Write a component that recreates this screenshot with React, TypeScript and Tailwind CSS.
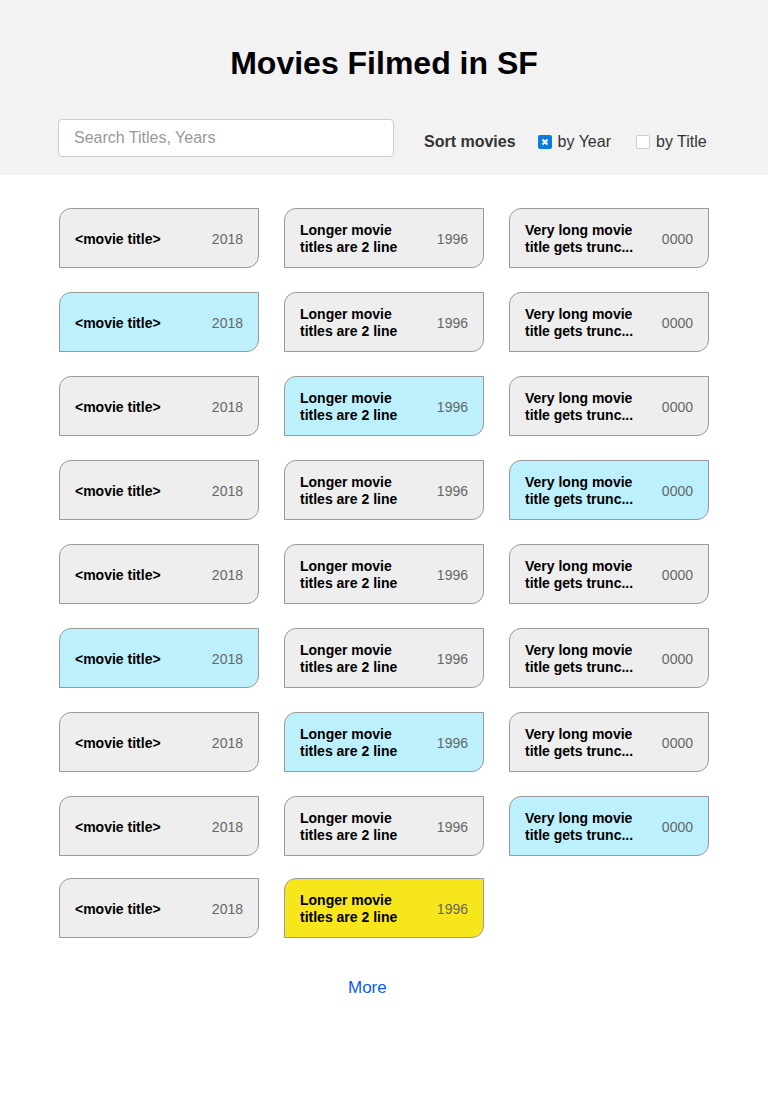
import React from 'react';

type Movie = { title: string; year: string; tone: 'gray' | 'cyan' | 'yellow'; last?: boolean };

const cols = [
    { title: '<movie title>', year: '2018' },
    { title: 'Longer movie titles are 2 line', year: '1996' },
    { title: 'Very long movie title gets trunc...', year: '0000' },
];

// which cell in each row is highlighted (col index), -1 = none
const highlight = [-1, 0, 1, 2, -1, 0, 1, 2];

const movies: Movie[] = [];
highlight.forEach(h => {
    cols.forEach((c, i) => movies.push({ ...c, tone: h === i ? 'cyan' : 'gray' }));
});
movies.push({ ...cols[0], tone: 'gray', last: true });
movies.push({ ...cols[1], tone: 'yellow', last: true });

const toneClass = {
    gray: 'bg-[#eeeeee]',
    cyan: 'bg-[#bdf0fd]',
    yellow: 'bg-[#f7e61c]',
};

const MovieCard: React.FC<{ movie: Movie }> = ({ movie }) => (
    <div className={`h-[60px] flex items-center justify-between pl-[15px] pr-[15px] pt-[2px] border border-[#999999] rounded-tl-[12px] rounded-br-[12px] ${toneClass[movie.tone]} ${movie.last ? 'mt-[-2px]' : ''}`}>
        <div className="w-[124px] text-[14px] leading-[17px] font-bold text-black">{movie.title}</div>
        <div className="text-[14px] text-[#666666]">{movie.year}</div>
    </div>
);

export default function App() {
    return (
        <div className="min-h-[1100px] bg-white" style={{ fontFamily: '"Liberation Sans", Arial, sans-serif' }}>
            {/* Header */}
            <div className="bg-[#f2f2f2] h-[175px] pt-[44px]">
                <h1 className="text-center text-[32px] leading-[38px] font-bold text-black">Movies Filmed in SF</h1>
                <div className="flex items-center mt-[37px] pl-[58px]">
                    <input
                        className="w-[336px] h-[38px] bg-white border border-[#cccccc] rounded-[4px] px-[15px] text-[16px] text-[#333] placeholder:text-[#999999] outline-none"
                        placeholder="Search Titles, Years"
                    />
                    <div className="flex items-center ml-[30px] mt-[8px] text-[16px] text-[#333333]">
                        <span className="font-bold">Sort movies</span>
                        <span className="ml-[22px] w-[14px] h-[14px] rounded-[2px] bg-[#0a7be0] flex items-center justify-center">
                            <svg width="8" height="8" viewBox="0 0 8 8">
                                <path d="M1.5 1.5 L6.5 6.5 M6.5 1.5 L1.5 6.5" stroke="white" strokeWidth="2" />
                            </svg>
                        </span>
                        <span className="ml-[6px]">by Year</span>
                        <span className="ml-[25px] w-[14px] h-[14px] rounded-[2px] bg-white border border-[#cccccc]" />
                        <span className="ml-[6px]">by Title</span>
                    </div>
                </div>
            </div>

            {/* Grid */}
            <div className="grid grid-cols-[200px_200px_200px] gap-x-[25px] gap-y-[24px] pl-[59px] pt-[33px]">
                {movies.map((m, i) => (
                    <MovieCard key={i} movie={m} />
                ))}
            </div>

            <div className="mt-[37px] pl-[348px] text-[17px] text-[#0a5cff]">More</div>
        </div>
    );
}
